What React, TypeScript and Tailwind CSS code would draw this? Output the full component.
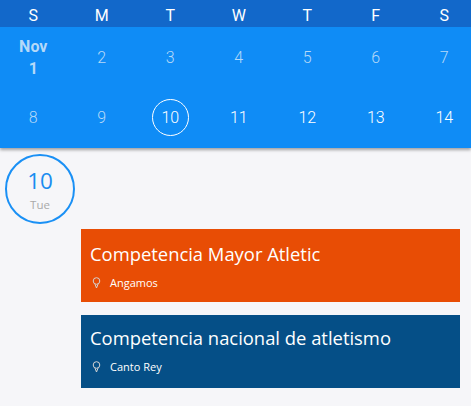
import React from "react";

const weekDays = ["S", "M", "T", "W", "T", "F", "S"];
const firstWeek = ["2", "3", "4", "5", "6", "7"];
const secondWeek = ["8", "9", "10", "11", "12", "13", "14"];

const LocationPin = () => (
    <svg className="ml-[2px]" width="9" height="12" viewBox="0 0 9 12" fill="none" stroke="#d4d4d4" strokeWidth="1">
        <circle cx="4.5" cy="4" r="3.3" />
        <path d="M3 7.2 L4.5 11 L6 7.2" />
    </svg>
);

interface EventCardProps {
    title: string;
    place: string;
    className: string;
}

const EventCard: React.FC<EventCardProps> = ({ title, place, className }) => {
    return (
        <div className={`h-[73px] w-[379px] pl-[9px] text-white font-['Open_Sans',sans-serif] ${className}`}>
            <div className="text-[18.4px] leading-[30px]">{title}</div>
            <div className="flex items-center mt-[6px]">
                <LocationPin />
                <span className="ml-[9px] text-[11px] leading-[15px]">{place}</span>
            </div>
        </div>
    );
};

const App = () => {
    return (
        <div className="w-[471px] h-[406px] overflow-hidden bg-[#f6f6f9] font-['Roboto',sans-serif]">
            <header className="h-[148px] bg-[#0f8cf6] shadow-[0_2px_3px_rgba(0,0,0,0.35)] relative">
                <div className="h-[27px] bg-[#1268ca]">
                    <div className="grid grid-cols-[repeat(7,68.5px)] ml-[-1px] h-full pt-[4px] items-center text-center text-white text-[16px] leading-[20px]">
                        {weekDays.map((d, i) => (
                            <span key={i}>{d}</span>
                        ))}
                    </div>
                </div>
                <div className="grid grid-cols-[repeat(7,68.5px)] grid-rows-[61px_59px] ml-[-1px] items-center text-center text-[16px] font-light">
                    <div className="flex flex-col items-center font-bold text-[#b5d9f8] text-[16px] leading-[22px] pt-[1px]">
                        <span>Nov</span>
                        <span>1</span>
                    </div>
                    {firstWeek.map((d) => (
                        <span key={d} className="text-[#b5d9f8]">{d}</span>
                    ))}
                    {secondWeek.map((d) => {
                        if (d === "10") {
                            return (
                                <div key={d} className="flex justify-center">
                                    <span className="w-[37px] h-[37px] rounded-full border border-white text-white flex items-center justify-center">
                                        {d}
                                    </span>
                                </div>
                            );
                        }
                        return (
                            <span key={d} className={d === "8" || d === "9" ? "text-[#b5d9f8]" : "text-white"}>
                                {d}
                            </span>
                        );
                    })}
                </div>
            </header>
            <main className="flex pl-[5px] pt-[6px]">
                <div className="w-[70px] h-[70px] pt-[2px] rounded-full border-2 border-[#1a90f5] flex flex-col items-center justify-center font-['Open_Sans',sans-serif]">
                    <span className="text-[#1a8cf0] text-[22.5px] leading-[26px]">10</span>
                    <span className="text-[#a9a9a9] text-[11.5px] leading-[15px] mt-[3px]">Tue</span>
                </div>
                <div className="flex flex-col gap-[13px] ml-[6px] pt-[75px]">
                    <EventCard title="Competencia Mayor Atletic" place="Angamos" className="bg-[#e84d05] pt-[10px]" />
                    <EventCard title="Competencia nacional de atletismo" place="Canto Rey" className="bg-[#054f87] pt-[8px]" />
                </div>
            </main>
        </div>
    );
};

export default App;
